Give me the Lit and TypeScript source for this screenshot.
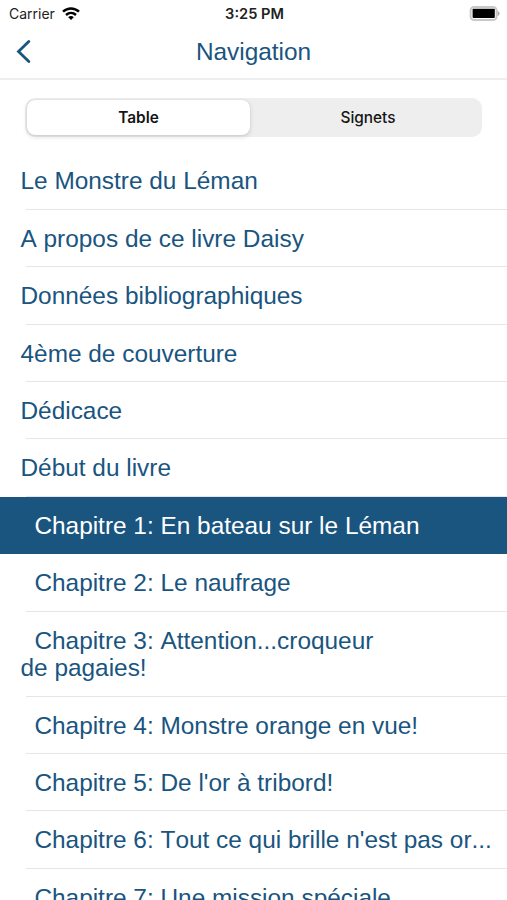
import { LitElement, html, css } from "lit";
import { customElement, property, state } from "lit/decorators.js";
import { classMap } from "lit/directives/class-map.js";

@customElement("status-bar")
class StatusBar extends LitElement {
  static styles = css`
    :host { display: grid; grid-template-columns: 1fr auto 1fr; align-items: center; height: 27px; padding: 0 7px 0 9px; font-size: 14px; color: #222; }
    .left { display: flex; align-items: center; gap: 7px; }
    .time { font-weight: 600; font-size: 14.6px; }
    .right { display: flex; justify-content: flex-end; }
    svg { display: block; }
  `;
  render() {
    return html`
      <div class="left"><span>Carrier</span>
        <svg width="18" height="14" viewBox="0 0 18 14" fill="none" stroke="#000" stroke-width="2.4">
          <path d="M1 4.7C5.6.4 12.4.4 17 4.7M4 8c2.9-2.7 7.1-2.7 10 0" />
          <path d="M9 13 6.2 10.2c1.6-1.5 4-1.5 5.6 0z" fill="#000" stroke="none" />
        </svg>
      </div>
      <div class="time">3:25 PM</div>
      <div class="right">
        <svg width="31" height="15" viewBox="0 0 31 15">
          <rect x="1.6" y="1" width="26" height="13" rx="3.6" fill="#fff" stroke="#c8c8c8" stroke-width="2" />
          <rect x="3.6" y="2.8" width="22.2" height="9.2" rx=".8" />
          <path d="M28.6 5c2.6 1 2.6 4 0 5z" fill="#aaa" />
        </svg>
      </div>`;
  }
}

@customElement("chapter-row")
class ChapterRow extends LitElement {
  @property() label = "";
  @property({ type: Boolean }) nested = false;
  @property({ type: Boolean }) selected = false;
  static styles = css`
    .row { box-sizing: border-box; min-height: 57.45px; padding: 15px 10px 15px 20.5px; font-size: 24.4px; font-kerning: none; line-height: 27.4px; color: #19557f; white-space: pre-line; background: linear-gradient(#e6e6e8, #e6e6e8) 26px 100% / 100% 1px no-repeat; }
    .nested { text-indent: 13.9px; }
    .selected { background: #19557f; color: #fff; }
  `;
  render() {
    return html`<div class=${classMap({ row: true, nested: this.nested, selected: this.selected })}>${this.label}</div>`;
  }
}

@customElement("app-root")
class AppRoot extends LitElement {
  @state() tab = "Table";
  private rows = [
    { label: "Le Monstre du Léman" },
    { label: "A propos de ce livre Daisy" },
    { label: "Données bibliographiques" },
    { label: "4ème de couverture" },
    { label: "Dédicace" },
    { label: "Début du livre" },
    { label: "Chapitre 1: En bateau sur le Léman", nested: true, selected: true },
    { label: "Chapitre 2: Le naufrage", nested: true },
    { label: "Chapitre 3: Attention...croqueur\nde pagaies!", nested: true },
    { label: "Chapitre 4: Monstre orange en vue!", nested: true },
    { label: "Chapitre 5: De l'or à tribord!", nested: true },
    { label: "Chapitre 6: Tout ce qui brille n'est pas or...", nested: true },
    { label: "Chapitre 7: Une mission spéciale", nested: true },
  ];
  static styles = css`
    :host { display: block; height: 900px; overflow: hidden; background: #fff; font-family: "Liberation Sans", Arial, sans-serif; }
    status-bar { font-family: Inter, sans-serif; }
    header { box-sizing: border-box; height: 53px; display: grid; grid-template-columns: 1fr auto 1fr; align-items: center; padding: 0 16px 2px; border-bottom: 2px solid #eee; color: #19557f; font-size: 24.4px; }
    .tabs { box-sizing: border-box; display: grid; grid-template-columns: 223px 1fr; margin: 17.5px 25px 15.8px 25px; height: 39px; padding: 2px; border-radius: 10px; background: #eeeeee; }
    .tab { border: 0; background: none; font: 500 15.4px Inter, sans-serif; color: #151515; border-radius: 8px; padding: 0; }
    .tab:last-child { padding-left: 6px; }
    .active { background: #fff; font-weight: 600; box-shadow: 0 2px 5px #0002, 0 0 1px #0003; }
    chapter-row { display: block; }
  `;
  render() {
    return html`
      <status-bar></status-bar>
      <header>
        <svg width="16" height="24" viewBox="0 0 16 24" fill="none" stroke="#19557f" stroke-width="2.8" stroke-linecap="round"><path d="M12.8 1.5 2.5 11.5l10.3 10" /></svg>
        <span>Navigation</span>
      </header>
      <div class="tabs">
        ${["Table", "Signets"].map((t) => html`<button class=${classMap({ tab: true, active: t === this.tab })} @click=${() => (this.tab = t)}>${t}</button>`)}
      </div>
      ${this.rows.map((r) => html`<chapter-row .label=${r.label} .nested=${!!r.nested} .selected=${!!r.selected}></chapter-row>`)}`;
  }
}
